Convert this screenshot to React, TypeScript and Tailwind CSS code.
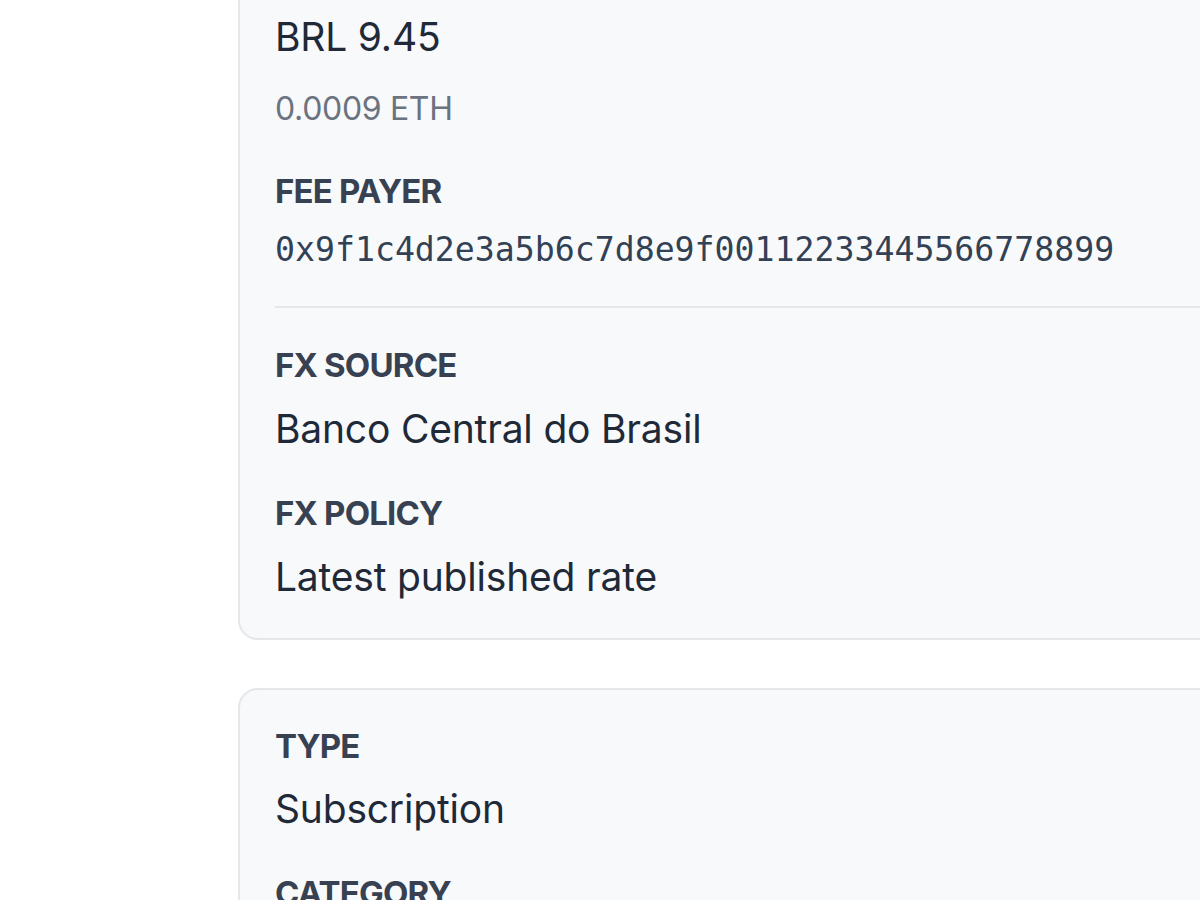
import React from "react";

const sans = { fontFamily: "Inter, 'Noto Sans', sans-serif" };

function Label({ children, className = "" }: { children: React.ReactNode; className?: string }) {
  return (
    <div className={`text-[33px] leading-[40px] font-bold tracking-[-0.025em] text-[#374151] ${className}`}>
      {children}
    </div>
  );
}

function Value({ children, className = "" }: { children: React.ReactNode; className?: string }) {
  return (
    <div className={`text-[39px] leading-[48px] font-normal tracking-[-0.005em] text-[#1f2937] ${className}`}>
      {children}
    </div>
  );
}

export default function App() {
  return (
    <div className="w-[1200px] h-[900px] overflow-hidden bg-white" style={sans}>
      <div className="pl-[238px] -mt-[40px] flex flex-col gap-[48px]">
        <div className="w-[1100px] rounded-[20px] border-2 border-[#e5e7eb] bg-[#f8f9fb] pl-[35px] pt-[51px] pb-[37px]">
          <Value className="tracking-[-0.02em]">BRL 9.45</Value>
          <div className="mt-[28px] text-[32px] leading-[40px] tracking-[-0.01em] text-[#6b7280]">0.0009 ETH</div>
          <Label className="mt-[42px]">FEE PAYER</Label>
          <div
            className="mt-[19px] text-[33.2px] leading-[40px] text-[#334155]"
            style={{ fontFamily: "'DejaVu Sans Mono', 'Liberation Mono', monospace" }}
          >
            0x9f1c4d2e3a5b6c7d8e9f00112233445566778899
          </div>
          <div className="mt-[36px] h-[2px] bg-[#e5e7eb]" />
          <Label className="mt-[37px]">FX SOURCE</Label>
          <Value className="mt-[20px]">Banco Central do Brasil</Value>
          <Label className="mt-[40px]">FX POLICY</Label>
          <Value className="mt-[20px]">Latest published rate</Value>
        </div>
        <div className="w-[1100px] rounded-[20px] border-2 border-[#e5e7eb] bg-[#f8f9fb] pl-[35px] pt-[36px] pb-[37px]">
          <Label>TYPE</Label>
          <Value className="mt-[19px]">Subscription</Value>
          <Label className="mt-[40px]">CATEGORY</Label>
          <Value className="mt-[20px]">Software</Value>
        </div>
      </div>
    </div>
  );
}
